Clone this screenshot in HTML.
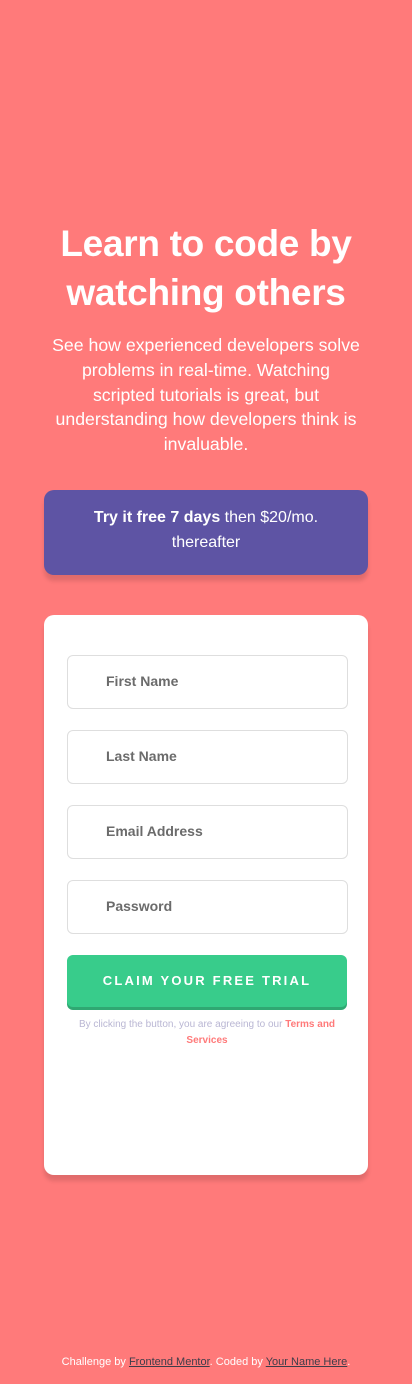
<!DOCTYPE html><html><head><style>
body{margin:0;width:412px;height:1384px;background:#ff7a7a;font-family:"Liberation Sans",sans-serif;position:relative;overflow:hidden;color:#fff}
.a{position:absolute;left:0;width:412px;text-align:center}
h1{position:absolute;left:0;width:412px;top:219px;margin:0;text-align:center;font-size:37px;line-height:49px;font-weight:700;letter-spacing:-0.3px}
.p{top:333px;font-size:17.7px;line-height:24.8px;padding:0 51px;box-sizing:border-box}
.promo{position:absolute;left:44px;top:490px;width:324px;height:85px;background:#5e54a4;border-radius:10px;box-shadow:0 6px 4px rgba(0,0,0,.12);text-align:center;font-size:16px;line-height:25px;box-sizing:border-box;padding-top:15px}
.card{position:absolute;left:44px;top:615px;width:324px;height:560px;background:#fff;border-radius:10px;box-shadow:0 6px 4px rgba(0,0,0,.12)}
.in{position:absolute;left:23px;width:281px;height:54px;border:1px solid #dedede;border-radius:6px;box-sizing:border-box;color:#6b6b6b;font-weight:700;font-size:14px;line-height:50px;padding-left:38px}
.btn{position:absolute;left:23px;top:340px;width:280px;height:52px;background:#38cc8b;border-radius:6px;box-shadow:0 3px 0 #2fa872;text-align:center;color:#fff;font-weight:700;font-size:13px;letter-spacing:2.2px;line-height:52px}
.t{position:absolute;left:23px;top:402px;width:280px;text-align:center;font-size:10px;line-height:16px;color:#b9b6d3}
.t b{color:#ff7a7a}
.f{top:1356px;font-size:11px}
.f u{color:#3e3c49}
</style></head><body>
<h1>Learn to code by<br>watching others</h1>
<div class="a p">See how experienced developers solve problems in real-time. Watching scripted tutorials is great, but understanding how developers think is invaluable.</div>
<div class="promo"><b>Try it free 7 days</b> then $20/mo.<br>thereafter</div>
<div class="card">
<div class="in" style="top:40px">First Name</div>
<div class="in" style="top:115px">Last Name</div>
<div class="in" style="top:190px">Email Address</div>
<div class="in" style="top:265px">Password</div>
<div class="btn">CLAIM YOUR FREE TRIAL</div>
<div class="t">By clicking the button, you are agreeing to our <b>Terms and Services</b></div>
</div>
<div class="a f">Challenge by <u>Frontend Mentor</u>. Coded by <u>Your Name Here</u>.</div>
</body></html>
